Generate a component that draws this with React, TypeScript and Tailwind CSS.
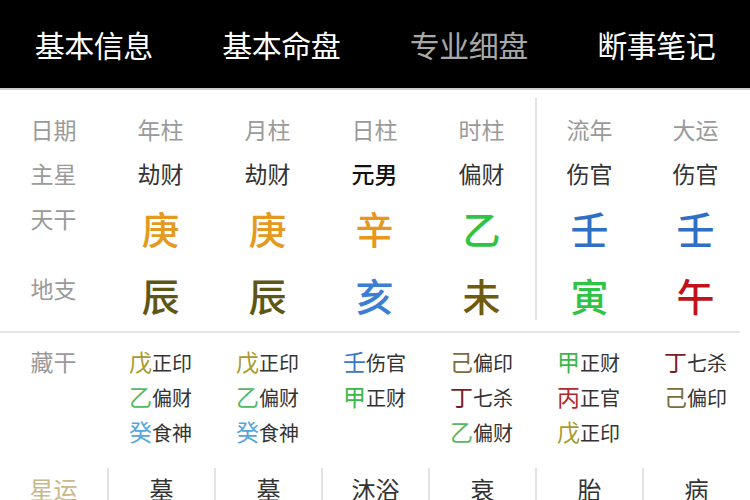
const tabs = [
  { name: "基本信息", active: false },
  { name: "基本命盘", active: false },
  { name: "专业细盘", active: true },
  { name: "断事笔记", active: false },
];

const heads = ["年柱", "月柱", "日柱", "时柱", "流年", "大运"];
const stars = ["劫财", "劫财", "元男", "偏财", "伤官", "伤官"];
const gan = [
  { c: "庚", color: "text-[#e39a1e]" },
  { c: "庚", color: "text-[#e39a1e]" },
  { c: "辛", color: "text-[#e8961c]" },
  { c: "乙", color: "text-[#2fc446]" },
  { c: "壬", color: "text-[#2f6fc4]" },
  { c: "壬", color: "text-[#2f6fc4]" },
];
const zhi = [
  { c: "辰", color: "text-[#5e5614]" },
  { c: "辰", color: "text-[#5e5614]" },
  { c: "亥", color: "text-[#3a7fd2]" },
  { c: "未", color: "text-[#705a0c]" },
  { c: "寅", color: "text-[#2fc446]" },
  { c: "午", color: "text-[#c0121c]" },
];

const stemColor: Record<string, string> = {
  戊: "text-[#a99a2e]",
  乙: "text-[#55b866]",
  癸: "text-[#55a6dc]",
  壬: "text-[#3a78c2]",
  甲: "text-[#3cb84a]",
  己: "text-[#7c6c3c]",
  丁: "text-[#7a1e22]",
  丙: "text-[#b02a2e]",
};

const hidden = [
  [["戊", "正印"], ["乙", "偏财"], ["癸", "食神"]],
  [["戊", "正印"], ["乙", "偏财"], ["癸", "食神"]],
  [["壬", "伤官"], ["甲", "正财"]],
  [["己", "偏印"], ["丁", "七杀"], ["乙", "偏财"]],
  [["甲", "正财"], ["丙", "正官"], ["戊", "正印"]],
  [["丁", "七杀"], ["己", "偏印"]],
];

const xingyun = ["墓", "墓", "沐浴", "衰", "胎", "病"];

const cell = "w-[107px] flex justify-center";

function Divider({ i }: { i: number }) {
  return i === 4 ? "border-l-2 border-[#e2e2e2]" : "";
}

export default function App() {
  return (
    <div className="w-[750px] h-[500px] overflow-hidden bg-white font-['Noto_Sans_CJK_SC',sans-serif]">
      {/* Tabs */}
      <div className="h-[90px] bg-black grid grid-cols-4 items-center border-b-2 border-[#cfcfcf]">
        {tabs.map((t) => (
          <div
            key={t.name}
            className={`text-center text-[30px] leading-none tracking-[-0.5px] ${t.active ? "text-[#a8a8a8]" : "text-white"}`}
          >
            {t.name}
          </div>
        ))}
      </div>

      {/* Pillars */}
      <div className="pt-[8px] pb-[11px]">
        <div className="flex h-[53px]">
          <div className={`${cell} pt-[18px] text-[23px] leading-[26px] text-[#9a9a9a]`}>日期</div>
          {heads.map((h, i) => (
            <div
              key={i}
              className={`${cell} pt-[18px] text-[23px] leading-[26px] text-[#9a9a9a] ${Divider({ i })}`}
            >
              {h}
            </div>
          ))}
        </div>
        <div className="flex h-[44px]">
          <div className={`${cell} items-center text-[23px] leading-[26px] text-[#9a9a9a]`}>主星</div>
          {stars.map((s, i) => (
            <div
              key={i}
              className={`${cell} items-center text-[23px] leading-[26px] ${i === 2 ? "text-[#111] font-medium" : "text-[#333]"} ${Divider({ i })}`}
            >
              {s}
            </div>
          ))}
        </div>
        <div className="flex h-[66px]">
          <div className={`${cell} pt-[12px] text-[23px] leading-[22px] text-[#9a9a9a]`}>天干</div>
          {gan.map((g, i) => (
            <div
              key={i}
              className={`${cell} pt-[13px] text-[38px] leading-[40px] font-medium ${g.color} ${Divider({ i })}`}
            >
              {g.c}
            </div>
          ))}
        </div>
        <div className="flex h-[59px]">
          <div className={`${cell} pt-[16px] text-[23px] leading-[22px] text-[#9a9a9a]`}>地支</div>
          {zhi.map((g, i) => (
            <div
              key={i}
              className={`${cell} pt-[14px] text-[38px] leading-[40px] font-medium ${g.color} ${Divider({ i })}`}
            >
              {g.c}
            </div>
          ))}
        </div>
      </div>
      <div className="h-[2px] w-[740px] bg-[#e6e6e6]" />

      {/* Hidden stems */}
      <div className="flex pt-[11px] h-[130px]">
        <div className={`${cell} text-[23px] leading-[35px] text-[#9a9a9a]`}>藏干</div>
        {hidden.map((col, i) => (
          <div key={i} className={cell}>
            <div className="flex flex-col">
              {col.map(([s, l], j) => (
                <div key={j} className="flex items-baseline h-[35px] leading-[35px]">
                  <span className={`text-[23px] ${stemColor[s]}`}>{s}</span>
                  <span className="text-[20px] text-[#333]">{l}</span>
                </div>
              ))}
            </div>
          </div>
        ))}
      </div>

      {/* Xing yun */}
      <div className="flex h-[40px] mt-[5px]">
        <div className={`${cell} pt-[8px] text-[24px] leading-[26px] text-[#c9b98a]`}>星运</div>
        {xingyun.map((x, i) => (
          <div
            key={i}
            className={`${cell} pt-[8px] text-[24px] leading-[26px] text-[#333] border-l-2 border-[#e2e2e2]`}
          >
            {x}
          </div>
        ))}
      </div>
    </div>
  );
}
